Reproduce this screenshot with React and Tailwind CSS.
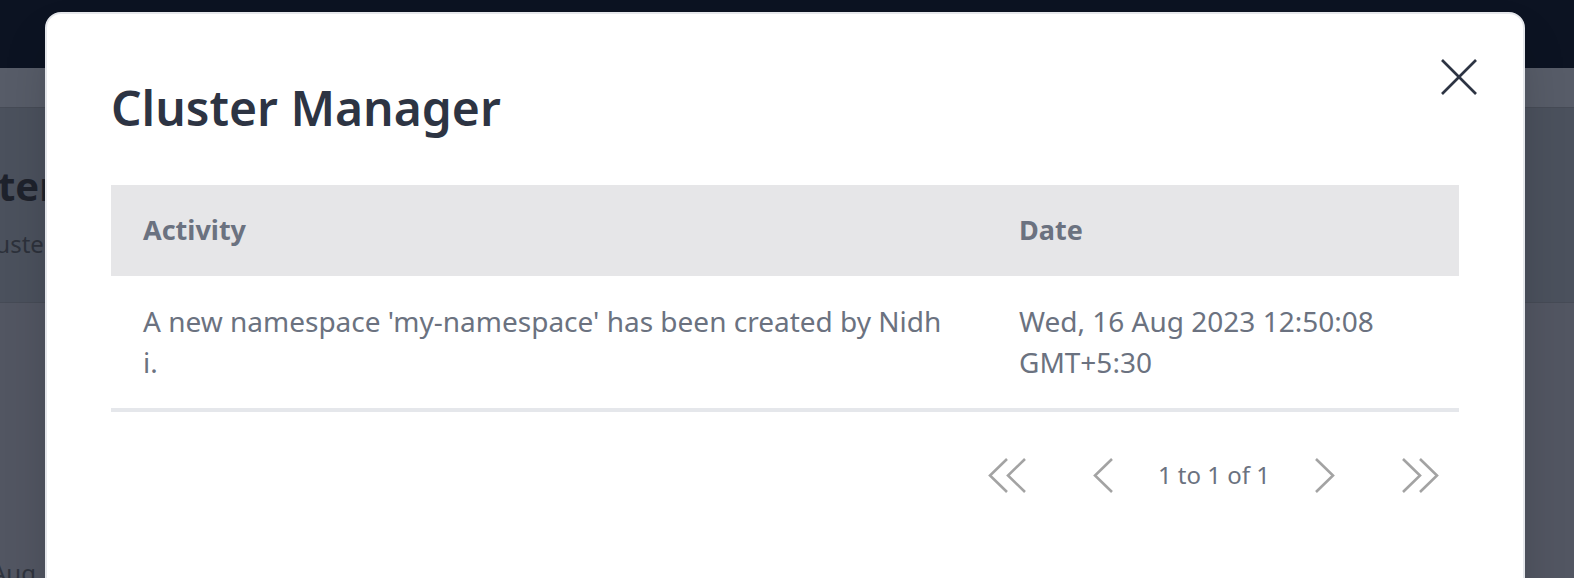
import React from "react";

const Chevron = ({ dir = "left", double = false }) => {
  const pts = dir === "left" ? "19,1 2,17.5 19,34" : "2,1 19,17.5 2,34";
  const second = dir === "left" ? "37,1 20,17.5 37,34" : "19,1 36,17.5 19,34";
  return (
    <svg
      width={double ? 39 : 21}
      height="35"
      viewBox={double ? "0 0 39 35" : "0 0 21 35"}
      fill="none"
      stroke="#a3a3a3"
      strokeWidth="2.6"
    >
      <polyline points={pts} />
      {double && <polyline points={second} />}
    </svg>
  );
};

const rows = [
  {
    id: 1,
    activity: "A new namespace 'my-namespace' has been created by Nidhi.",
    date: "Wed, 16 Aug 2023 12:50:08 GMT+5:30",
  },
];

const App = () => {
  return (
    <div
      className="relative h-[578px] w-full overflow-hidden bg-[#525662]"
      style={{ fontFamily: '"Noto Sans", "Open Sans", sans-serif' }}
    >
      {/* PAGE BEHIND THE MODAL (dimmed) */}
      <div className="h-[68px] bg-[#0c1322]"></div>
      <div className="h-[40px] bg-[#575c68] border-b border-[#464b56]"></div>
      <div className="h-[195px] bg-[#4b515d] border-b border-[#464b56] pt-[58px]">
        <div className="ml-[-2px] text-[40px] leading-none font-bold text-[#1e222c]">
          tenant cluster
        </div>
        <div className="ml-[-26px] mt-[26px] text-[24px] leading-none text-[#2d313b]">
          Cluster details
        </div>
      </div>
      <div className="pt-[258px] ml-[-9px] text-[24px] leading-none text-[#2f343e]">
        Aug
      </div>

      {/* MODAL */}
      <div className="absolute left-[45px] top-[12px] w-[1480px] h-[640px] bg-white rounded-2xl border-2 border-[#e5e7eb] shadow-2xl pl-[64px] pr-[64px] pt-[64px]">
        <button className="absolute right-[46px] top-[45px]">
          <svg width="36" height="36" viewBox="0 0 36 36" stroke="#2d3443" strokeWidth="2.6">
            <line x1="1" y1="1" x2="35" y2="35" />
            <line x1="35" y1="1" x2="1" y2="35" />
          </svg>
        </button>

        <h2 className="text-[48px] leading-[60px] font-semibold text-[#2d3443]">
          Cluster Manager
        </h2>

        {/* TABLE */}
        <div className="mt-[47px]">
          <div className="grid grid-cols-[876px_1fr] h-[91px] items-center bg-[#e6e6e8] text-[27px] font-bold text-[#6b7280]">
            <div className="px-8">Activity</div>
            <div className="px-8">Date</div>
          </div>
          {rows.map((row) => (
            <div
              key={row.id}
              className="grid grid-cols-[876px_1fr] border-b-4 border-[#e5e7eb] py-[25px] text-[28px] leading-[41px] text-[#6b7280]"
            >
              <div className="pl-8 pr-[43px] break-all">{row.activity}</div>
              <div className="px-8 pr-[60px]">{row.date}</div>
            </div>
          ))}

          {/* PAGINATION */}
          <div className="flex items-center justify-end pr-[19px] pt-[45px]">
            <Chevron dir="left" double />
            <div className="ml-[66px]">
              <Chevron dir="left" />
            </div>
            <span className="ml-[44px] text-[24px] text-[#6b7280]">1 to 1 of 1</span>
            <div className="ml-[44px]">
              <Chevron dir="right" />
            </div>
            <div className="ml-[66px]">
              <Chevron dir="right" double />
            </div>
          </div>
        </div>
      </div>
    </div>
  );
};

export default App;
